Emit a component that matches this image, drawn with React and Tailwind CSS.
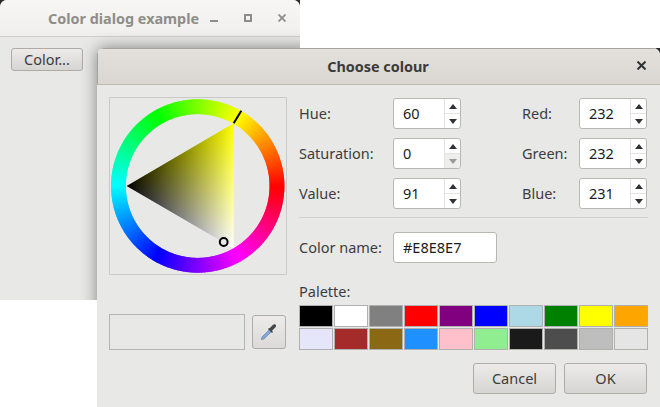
import React from 'react';

const font = { fontFamily: '"Noto Sans", sans-serif' };

const palette = [
  '#000000', '#ffffff', '#808080', '#ff0000', '#800080', '#0000ff', '#add8e6', '#008000', '#ffff00', '#ffa500',
  '#e6e6fa', '#a52a2a', '#8b6914', '#1e90ff', '#ffc0cb', '#90ee90', '#1a1a1a', '#4d4d4d', '#bebebe', '#e5e5e5',
];

function Arrow({ up, dim }) {
  return (
    <svg width="8" height="5" viewBox="0 0 8 5">
      <path d={up ? 'M4 0L8 5H0Z' : 'M4 5L8 0H0Z'} fill={dim ? '#9a9a9a' : '#2e3436'} />
    </svg>
  );
}

function Spin({ value, downDisabled }) {
  return (
    <div className="flex h-[31px] w-[68px] overflow-hidden rounded-[3px] border border-[#b9b7b2] bg-white">
      <div className="flex flex-1 items-center pl-[9px] text-[14.5px] text-[#1c1c1c]">{value}</div>
      <div className="flex w-[16px] flex-col border-l border-[#e3e3e2]">
        <div className="flex flex-1 items-center justify-center border-b border-[#e3e3e2]">
          <Arrow up />
        </div>
        <div className={`flex flex-1 items-center justify-center ${downDisabled ? 'bg-[#eeeeed]' : ''}`}>
          <Arrow dim={downDisabled} />
        </div>
      </div>
    </div>
  );
}

function Field({ label, value, labelWidth, downDisabled }) {
  return (
    <div className="flex h-[31px] items-center">
      <span className="text-[14.5px] text-[#3d3d3d]" style={{ width: labelWidth }}>{label}</span>
      <Spin value={value} downDisabled={downDisabled} />
    </div>
  );
}

function Button({ children, className }) {
  return (
    <div className={`flex items-center justify-center rounded-[3px] border border-[#aeaca7] bg-gradient-to-b from-[#ecebe9] to-[#d6d5d2] text-[14.5px] text-[#3c3c3c] ${className}`}>
      {children}
    </div>
  );
}

function Wheel() {
  const cx = 87.7;
  const cy = 88;
  const segments = Array.from({ length: 360 }, (_, h) => {
    const a0 = ((h - 0.9) * Math.PI) / 180;
    const a1 = ((h + 0.9) * Math.PI) / 180;
    const r = 79.3;
    const d = `M${cx + r * Math.cos(a0)} ${cy - r * Math.sin(a0)}L${cx + r * Math.cos(a1)} ${cy - r * Math.sin(a1)}`;
    return <path key={h} d={d} stroke={`hsl(${h},100%,50%)`} strokeWidth="14.8" fill="none" />;
  });
  const x0 = 16.7;
  const x1 = 123.7;
  const columns = Array.from({ length: 107 }, (_, i) => {
    const t = (i + 0.5) / 107;
    const v = Math.round(255 * t);
    const half = 62.5 * t;
    return { i, v, y1: cy - half, y2: cy + half };
  });
  return (
    <svg width="176" height="176" viewBox="0 0 176 176">
      <defs>
        <clipPath id="tri">
          <polygon points={`${x0},${cy} ${x1},25.3 ${x1},150.3`} />
        </clipPath>
        {columns.map((c) => (
          <linearGradient key={c.i} id={`col${c.i}`} gradientUnits="userSpaceOnUse" x1="0" x2="0" y1={c.y1} y2={c.y2}>
            <stop offset="0" stopColor={`rgb(${c.v},${c.v},0)`} />
            <stop offset="1" stopColor={`rgb(${c.v},${c.v},${c.v})`} />
          </linearGradient>
        ))}
      </defs>
      {segments}
      <g clipPath="url(#tri)">
        {columns.map((c) => (
          <rect key={c.i} x={x0 + c.i} y={c.y1 - 1} width="1.4" height={c.y2 - c.y1 + 2} fill={`url(#col${c.i})`} />
        ))}
      </g>
      <line x1="123.7" y1="25.3" x2="131.3" y2="12.7" stroke="#000" strokeWidth="2" />
      <circle cx="113.7" cy="144" r="3.9" fill="#e8e8e7" fillOpacity="0.6" stroke="#000" strokeWidth="2" />
    </svg>
  );
}

function Dropper() {
  return (
    <svg width="18" height="18" viewBox="0 0 18 18">
      <path d="M1.5 16.5L2 14L9 7L11 9L4 16Z" fill="#7fa9de" stroke="#7488a3" strokeWidth="0.8" />
      <path d="M8 6L12 10L13 9L12 7.8L15.2 4.6C16.4 3.3 16.2 2.2 15.6 1.7C15 1 13.6 1 12.5 2.2L9.6 5.2L9 5Z" fill="#45484a" />
    </svg>
  );
}

export default function App() {
  return (
    <div className="relative h-[407px] w-[660px] overflow-hidden bg-white" style={font}>
      {/* dark desktop showing through the rounded window corners */}
      <div className="absolute left-0 top-0 h-[6px] w-[6px] bg-[#2a2a2a]" />
      <div className="absolute left-[294px] top-0 h-[6px] w-[6px] bg-[#2a2a2a]" />
      <div className="absolute right-0 top-[48px] h-[6px] w-[6px] bg-[#2a2a2a]" />

      {/* Main window */}
      <div className="absolute left-0 top-0 h-[300px] w-[300px] overflow-hidden rounded-t-[7px] bg-[#e8e8e7]">
        <div className="relative flex h-[37px] items-center border-b border-[#d3cfc8] bg-gradient-to-b from-[#f7f6f5] to-[#f0efed] pt-[1px]">
          <span className="ml-[48px] text-[14.4px] font-bold text-[#8f8d88]">Color dialog example</span>
          <svg className="absolute left-[210px] top-[20px]" width="8" height="2"><rect width="8" height="2" fill="#8f8d88" /></svg>
          <svg className="absolute left-[244px] top-[14px]" width="8" height="8"><rect x="1" y="1" width="6" height="6" fill="none" stroke="#8f8d88" strokeWidth="2" /></svg>
          <svg className="absolute left-[278px] top-[14px]" width="8" height="8"><path d="M0.5 0.5L7.5 7.5M7.5 0.5L0.5 7.5" stroke="#8f8d88" strokeWidth="1.8" /></svg>
        </div>
        <Button className="ml-[11px] mt-[11px] h-[23px] w-[72px]">Color...</Button>
        {/* shadow of the dialog, only falls on this window */}
        <div className="absolute left-[97px] top-[48px] h-[359px] w-[563px] rounded-t-[7px] shadow-[0_0_16px_rgba(0,0,0,0.45)]" />
      </div>

      {/* Dialog */}
      <div className="absolute left-[97px] top-[48px] flex h-[359px] w-[563px] flex-col overflow-hidden rounded-t-[7px] bg-[#e8e8e7]">
        <div className="relative flex h-[37px] shrink-0 items-center justify-center border-b border-[#bfbab2] bg-gradient-to-b from-[#e4e1dd] to-[#dad7d2] pt-[1px] pr-[1px] shadow-[inset_1px_1px_0_#a5a39f]">
          <span className="text-[14.4px] font-bold text-[#3a3a38]">Choose colour</span>
          <svg className="absolute right-[14px] top-[13px]" width="9" height="9"><path d="M0.5 0.5L8.5 8.5M8.5 0.5L0.5 8.5" stroke="#2e3436" strokeWidth="2" /></svg>
        </div>
        <div className="flex flex-1 gap-[12px] pl-[12px] pt-[12px]">
          <div className="flex w-[178px] flex-col">
            <div className="h-[178px] w-[178px] rounded-[1px] border border-[#c9c9c8]">
              <Wheel />
            </div>
            <div className="mt-[39px] flex items-center gap-[7px]">
              <div className="h-[36px] w-[136px] border border-[#b5b5b4]" />
              <Button className="h-[34px] w-[34px] from-[#eaeae8] to-[#dbdad8]"><Dropper /></Button>
            </div>
          </div>
          <div className="flex w-[349px] flex-col pt-[1px]">
            <div className="flex justify-between pr-[1px]">
              <div className="flex flex-col gap-[9px]">
                <Field label="Hue:" value="60" labelWidth={94} />
                <Field label="Saturation:" value="0" labelWidth={94} downDisabled />
                <Field label="Value:" value="91" labelWidth={94} />
              </div>
              <div className="flex flex-col gap-[9px]">
                <Field label="Red:" value="232" labelWidth={57} />
                <Field label="Green:" value="232" labelWidth={57} />
                <Field label="Blue:" value="231" labelWidth={57} />
              </div>
            </div>
            <div className="mt-[8px] h-px bg-[#d0d0cf]" />
            <div className="mt-[14px] flex h-[31px] items-center">
              <span className="w-[94px] text-[14.5px] text-[#3d3d3d]">Color name:</span>
              <div className="flex h-[31px] w-[104px] items-center rounded-[3px] border border-[#b9b7b2] bg-white pl-[9px] text-[14.5px] text-[#1c1c1c]">#E8E8E7</div>
            </div>
            <div className="mt-[18px] text-[14.5px] leading-[20px] text-[#3d3d3d]">Palette:</div>
            <div className="mt-[4px] grid grid-cols-[repeat(10,34px)] gap-[1px]">
              {palette.map((c, i) => (
                <div key={i} className="h-[22px] border border-[#b0b0af]" style={{ backgroundColor: c }} />
              ))}
            </div>
            <div className="mt-[13px] flex justify-end gap-[8px] pr-[1px]">
              <Button className="h-[31px] w-[83px]">Cancel</Button>
              <Button className="h-[31px] w-[83px]">OK</Button>
            </div>
          </div>
        </div>
      </div>
    </div>
  );
}
